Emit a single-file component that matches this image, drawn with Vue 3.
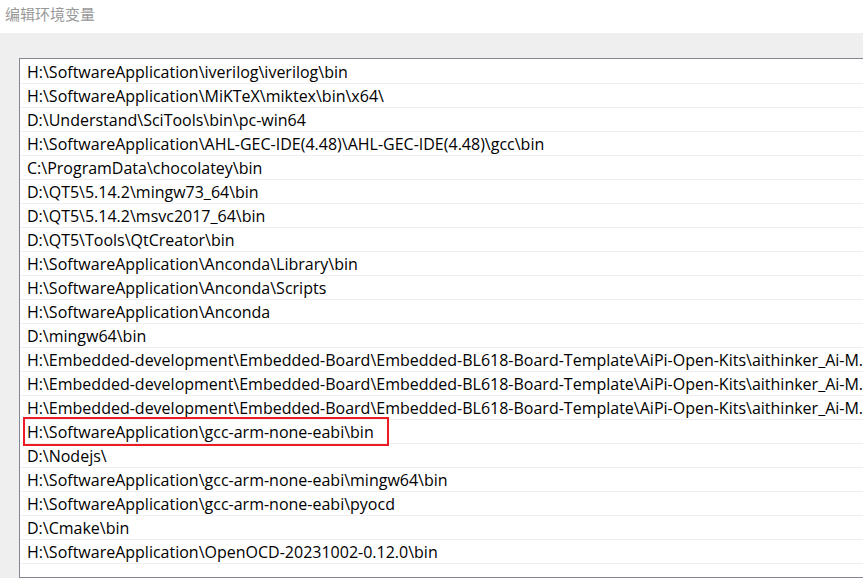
<script setup>
const kit = 'H:\\Embedded-development\\Embedded-Board\\Embedded-BL618-Board-Template\\AiPi-Open-Kits\\aithinker_Ai-M...'

const paths = [
  'H:\\SoftwareApplication\\iverilog\\iverilog\\bin',
  'H:\\SoftwareApplication\\MiKTeX\\miktex\\bin\\x64\\',
  'D:\\Understand\\SciTools\\bin\\pc-win64',
  'H:\\SoftwareApplication\\AHL-GEC-IDE(4.48)\\AHL-GEC-IDE(4.48)\\gcc\\bin',
  'C:\\ProgramData\\chocolatey\\bin',
  'D:\\QT5\\5.14.2\\mingw73_64\\bin',
  'D:\\QT5\\5.14.2\\msvc2017_64\\bin',
  'D:\\QT5\\Tools\\QtCreator\\bin',
  'H:\\SoftwareApplication\\Anconda\\Library\\bin',
  'H:\\SoftwareApplication\\Anconda\\Scripts',
  'H:\\SoftwareApplication\\Anconda',
  'D:\\mingw64\\bin',
  kit,
  kit,
  kit,
  'H:\\SoftwareApplication\\gcc-arm-none-eabi\\bin',
  'D:\\Nodejs\\',
  'H:\\SoftwareApplication\\gcc-arm-none-eabi\\mingw64\\bin',
  'H:\\SoftwareApplication\\gcc-arm-none-eabi\\pyocd',
  'D:\\Cmake\\bin',
  'H:\\SoftwareApplication\\OpenOCD-20231002-0.12.0\\bin',
]
const marked = 15
</script>

<template>
  <div class="dialog">
    <header class="titlebar">
      <h1 class="title">编辑环境变量</h1>
    </header>
    <main class="body">
      <ul class="list">
        <li v-for="(path, i) in paths" :key="i" class="row">
          <span class="path" :class="{ marked: i === marked }">{{ path }}</span>
        </li>
      </ul>
    </main>
  </div>
</template>

<style>
body {
  margin: 0;
  background: #efefef;
}
</style>

<style scoped>
.dialog {
  overflow: hidden;
  font-family: "Open Sans", "Noto Sans CJK SC", sans-serif;
  color: #000;
}
.titlebar {
  padding: 2px 5px 7px;
  background: #fff;
}
.title {
  margin: 0;
  font-family: "Noto Sans CJK SC", sans-serif;
  font-size: 15px;
  font-weight: 400;
  line-height: 24px;
  color: #999;
}
.body {
  padding: 25px 0 0 19px;
  background: #efefef;
}
.list {
  margin: 0;
  padding: 1px 0 13px 1px;
  list-style: none;
  background: #fff;
  border: 1px solid #828790;
  border-right: 0;
}
.row {
  height: 23px;
  padding-left: 6px;
  border-bottom: 1px solid #efefef;
  font-size: 16px;
  line-height: 24px;
  white-space: nowrap;
}
.path {
  display: inline-block;
  position: relative;
}
.marked::after {
  content: "";
  position: absolute;
  inset: -3px -15px -2px -4px;
  border: 2px solid #ed1c24;
}
</style>
